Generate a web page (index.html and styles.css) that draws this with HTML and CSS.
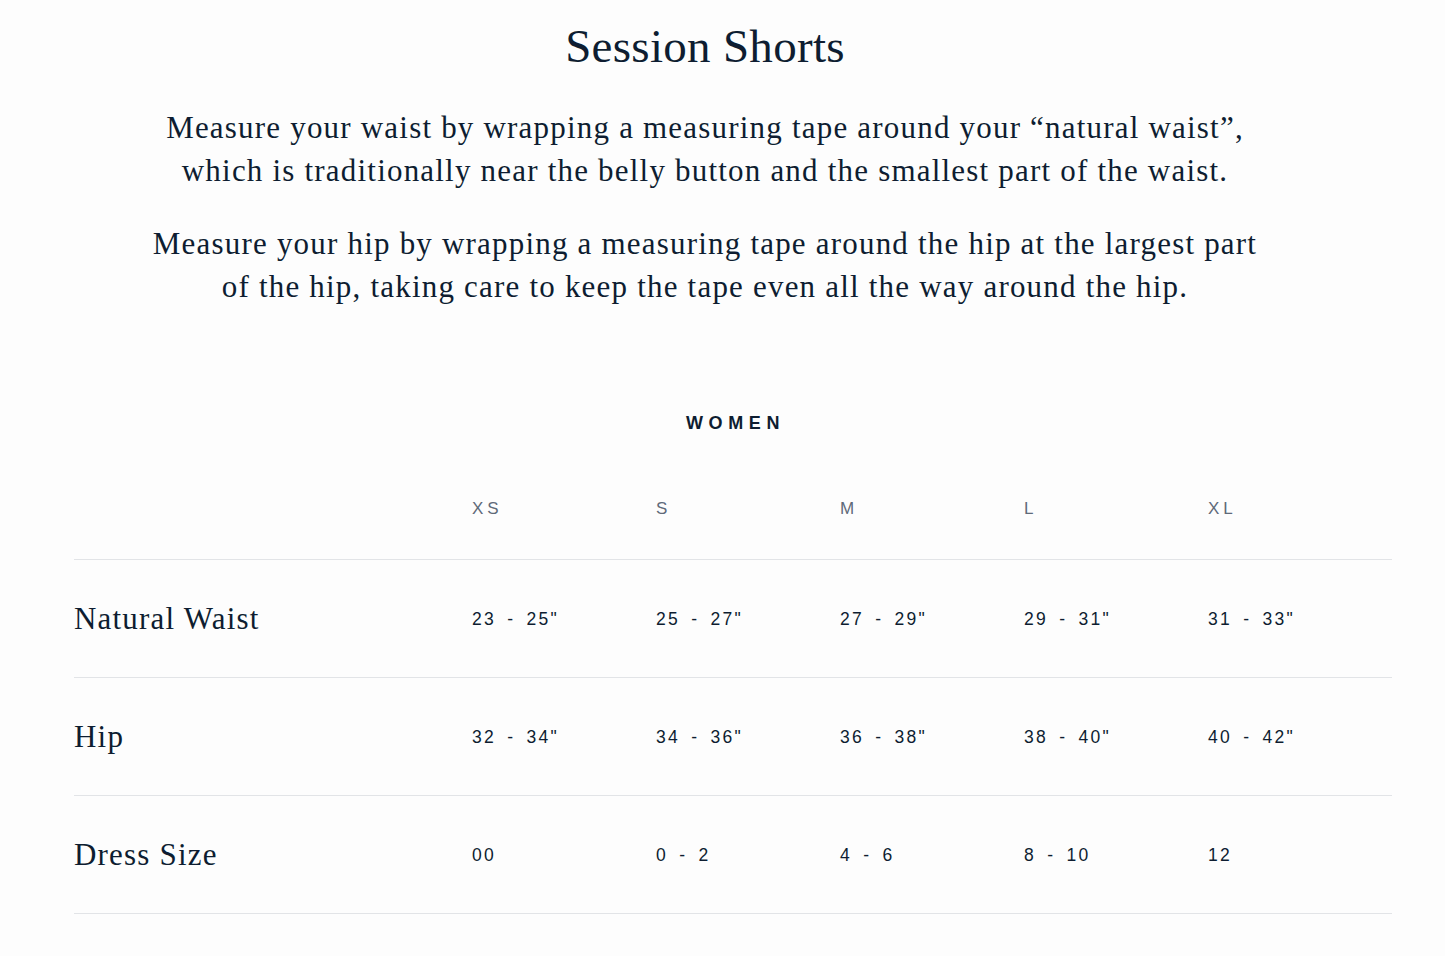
FILE: index.html
```html
<!DOCTYPE html>
<html lang="en">
<head>
<meta charset="utf-8">
<title>Session Shorts – Size Guide</title>
<link rel="stylesheet" href="styles.css">
</head>
<body>
<main class="page">
  <section class="intro">
    <h1 class="title">Session Shorts</h1>
    <p class="copy">Measure your waist by wrapping a measuring tape around your “natural waist”,<br>which is traditionally near the belly button and the smallest part of the waist.</p>
    <p class="copy">Measure your hip by wrapping a measuring tape around the hip at the largest part<br>of the hip, taking care to keep the tape even all the way around the hip.</p>
  </section>
  <section class="chart">
    <h2 class="chart-title">WOMEN</h2>
    <div class="row head">
      <div class="label"></div>
      <div class="size">XS</div>
      <div class="size">S</div>
      <div class="size">M</div>
      <div class="size">L</div>
      <div class="size">XL</div>
    </div>
    <div class="row">
      <div class="label">Natural Waist</div>
      <div class="val">23 - 25"</div>
      <div class="val">25 - 27"</div>
      <div class="val">27 - 29"</div>
      <div class="val">29 - 31"</div>
      <div class="val">31 - 33"</div>
    </div>
    <div class="row">
      <div class="label">Hip</div>
      <div class="val">32 - 34"</div>
      <div class="val">34 - 36"</div>
      <div class="val">36 - 38"</div>
      <div class="val">38 - 40"</div>
      <div class="val">40 - 42"</div>
    </div>
    <div class="row">
      <div class="label">Dress Size</div>
      <div class="val">00</div>
      <div class="val">0 - 2</div>
      <div class="val">4 - 6</div>
      <div class="val">8 - 10</div>
      <div class="val">12</div>
    </div>
  </section>
</main>
</body>
</html>
```
FILE: styles.css
```css
* { box-sizing: border-box; }
html, body { margin: 0; padding: 0; }
body {
  background: #fdfdfd;
  color: #0e1d31;
  font-family: "Liberation Serif", "Times New Roman", serif;
}
.page {
  width: 1445px;
  padding-top: 18px;
}
.intro {
  width: 1410px;
  text-align: center;
}
.title {
  margin: 0;
  font-weight: 400;
  font-size: 47px;
  line-height: 56px;
  letter-spacing: 0.3px;
}
.copy {
  margin: 32px 0 0;
  font-size: 31px;
  line-height: 43px;
  letter-spacing: 1.2px;
}
.copy + .copy { margin-top: 30px; }
.chart {
  margin: 105px 0 0 74px;
  width: 1318px;
}
.chart-title {
  margin: 0;
  text-align: center;
  font-family: "Liberation Sans", Arial, sans-serif;
  font-weight: 700;
  font-size: 18px;
  line-height: 20px;
  letter-spacing: 5.6px;
  padding-left: 5px;
}
.row {
  display: grid;
  grid-template-columns: 398px repeat(5, 184px);
  align-items: center;
  height: 118px;
  border-bottom: 1px solid #e2e4e7;
}
.row.head {
  height: 127px;
  align-items: start;
  padding-top: 66px;
}
.label {
  font-size: 31px;
  line-height: 40px;
  letter-spacing: 1.2px;
}
.size {
  font-family: "Liberation Sans", Arial, sans-serif;
  font-size: 17px;
  line-height: 20px;
  letter-spacing: 4px;
  color: #5f6a79;
}
.val {
  font-family: "Liberation Sans", Arial, sans-serif;
  font-size: 17.5px;
  line-height: 20px;
  letter-spacing: 2.3px;
  word-spacing: 4px;
}
```
